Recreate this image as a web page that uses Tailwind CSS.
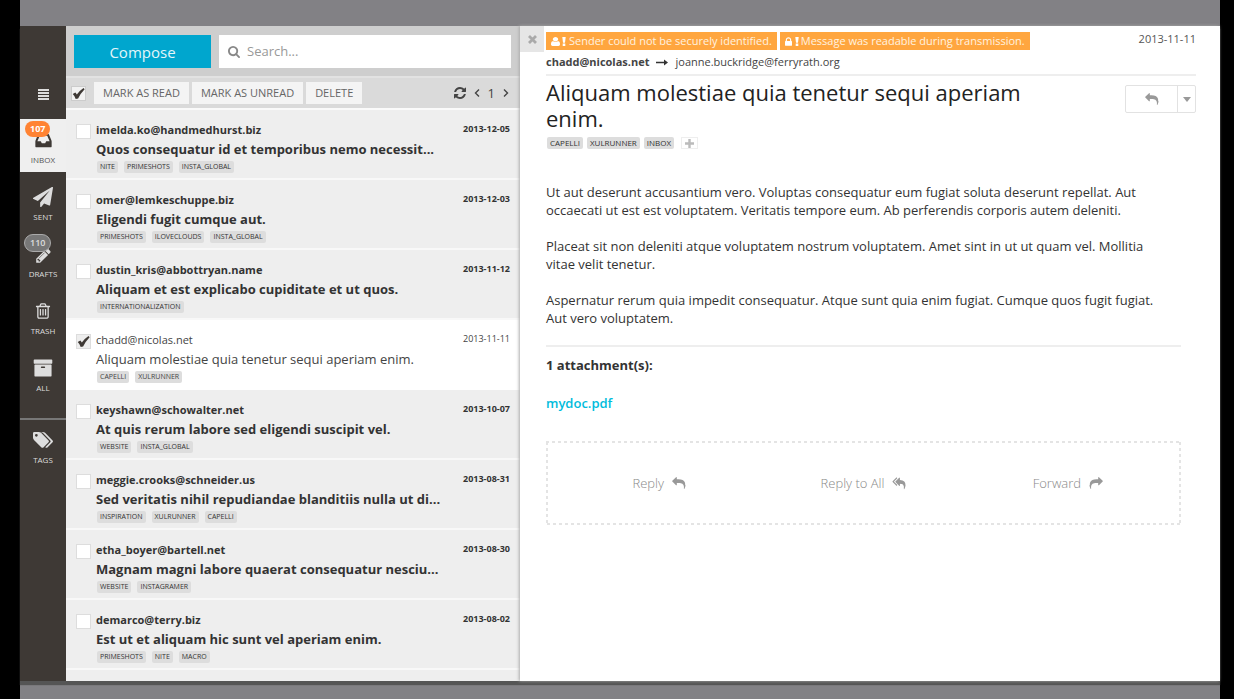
<!DOCTYPE html>
<html lang="en">
<head>
<meta charset="utf-8">
<title>Inbox</title>
<script src="https://cdn.jsdelivr.net/npm/@tailwindcss/browser@4"></script>
</head>
<body class="bg-black pr-[14px] pl-5 font-['Open_Sans',sans-serif] text-[#333]">
<svg class="hidden" aria-hidden="true">
  <symbol id="reply" viewBox="0 0 1792 1792"><path d="M1792 1120q0 166-127 451-3 7-10.5 24t-13.5 30-13 22q-12 17-28 17-15 0-23.500-10t-8.500-25q0-9 2.500-26.500t2.500-23.500q5-68 5-123 0-112-19.500-200.500t-54-153.500-88.500-112-115-78.500-142.500-48-161-23.500-178.500-6.500h-224v256q0 26-19 45t-45 19-45-19l-512-512q-19-19-19-45t19-45l512-512q19-19 45-19t45 19 19 45v256h224q713 0 875 403 53 134 53 333z"/></symbol>
  <symbol id="reply-all" viewBox="0 0 1792 1792"><path d="M640 1082v70q0 42-39 59-13 5-25 5-27 0-45-19l-512-512q-19-19-19-45t19-45l512-512q29-31 70-14 39 17 39 59v69l-397 398q-19 19-19 45t19 45zm1152 58q0 58-17 133.500t-38.500 138-48 125-40.500 90.500l-20 40q-8 17-28 17-6 0-9-1-25-8-23-34 43-400-106-565-64-71-170.500-110.500t-267.500-52.500v251q0 42-39 59-13 5-25 5-27 0-45-19l-512-512q-19-19-19-45t19-45l512-512q29-31 70-14 39 17 39 59v262q411 28 599 221 169 173 169 509z"/></symbol>
  <symbol id="check" viewBox="0 0 14 12"><path d="M.8 6.600L3.600 4.800Q4.600 5.800 5.200 7.200Q8 2.800 12.400 0L13.600 1.400Q9.400 5.600 6.600 11.400L4 12Q3 8.700.8 6.600z"/></symbol>
</svg>
<div class="flex h-screen flex-col bg-[#828185] pt-[26px] pb-[17px]">
<div class="flex min-h-0 flex-1 border-b border-[#555] bg-white shadow-[0_3px_1px_#555]">

  <nav class="w-[46px] shrink-0 bg-[#3e3935] text-[8px] text-[#ddd]">
    <div class="flex h-[93px] justify-center pt-[62px]">
      <button type="button" aria-label="Menu" class="h-3 w-[11px]"><svg class="h-[11px] w-[11px]" viewBox="0 0 11 11" fill="#ddd"><path d="M0 0h11v2H0zM0 3h11v2H0zM0 6h11v2H0zM0 9h11v2H0z"/></svg></button>
    </div>
    <a href="#inbox" class="relative flex h-[53px] flex-col items-center bg-[#efefef] pt-3 text-[#555]">
      <svg class="h-[19px] w-[19px]" viewBox="0 0 1792 1792" fill="#3e3935"><path d="M1151 960h316q-1-3-2.500-8t-2.500-8l-212-496h-708l-212 496q-1 2-2.500 8t-2.500 8h316l95 192h320zm513 30v482q0 26-19 45t-45 19h-1408q-26 0-45-19t-19-45v-482q0-62 25-123l238-552q10-25 36.500-42t52.500-17h832q26 0 52.500 17t36.500 42l238 552q25 61 25 123z"/></svg>
      <span class="absolute top-[2px] left-[5px] rounded-full bg-[#ff8333] px-[5px] text-[9px] leading-4 font-bold text-white">107</span>
      <span class="mt-1 leading-3">INBOX</span>
    </a>
    <a href="#sent" class="flex h-[57px] flex-col items-center pt-[15px]">
      <svg class="h-5 w-5" viewBox="0 0 1792 1792" fill="#ddd"><path d="M1764 11q33 24 27 64l-256 1536q-5 29-32 45-14 8-31 8-11 0-24-5l-453-185-242 295q-18 23-49 23-13 0-22-4-19-7-30.500-23.500t-11.500-36.500v-349l864-1059-1069 925-395-162q-37-14-40-55-2-40 32-59l1664-960q15-9 32-9 20 0 36 11z"/></svg>
      <span class="mt-1 leading-3">SENT</span>
    </a>
    <a href="#drafts" class="relative flex h-[57px] flex-col items-center pt-[18px]">
      <svg class="h-[17px] w-[17px]" viewBox="0 0 1792 1792" fill="#ddd"><path d="M491 1536l91-91-235-235-91 91v107h128v128h107zm523-928q0-22-22-22-10 0-17 7l-542 542q-7 7-7 17 0 22 22 22 10 0 17-7l542-542q7-7 7-17zm-54-192l416 416-832 832h-416v-416zm683 96q0 53-37 90l-166 166-416-416 166-165q36-38 90-38 53 0 91 38l235 234q37 39 37 91z"/></svg>
      <span class="absolute top-[5px] left-1 rounded-full border border-[#aaa] bg-[#777] px-[5px] text-[9px] leading-4 font-semibold text-[#ddd]">110</span>
      <span class="mt-1 leading-3">DRAFTS</span>
    </a>
    <a href="#trash" class="flex h-[57px] flex-col items-center pt-4">
      <svg class="h-[18px] w-[18px]" viewBox="0 0 1792 1792" fill="#ddd"><path d="M704 736v576q0 14-9 23t-23 9h-64q-14 0-23-9t-9-23v-576q0-14 9-23t23-9h64q14 0 23 9t9 23zm256 0v576q0 14-9 23t-23 9h-64q-14 0-23-9t-9-23v-576q0-14 9-23t23-9h64q14 0 23 9t9 23zm256 0v576q0 14-9 23t-23 9h-64q-14 0-23-9t-9-23v-576q0-14 9-23t23-9h64q14 0 23 9t9 23zm128 724v-948h-896v948q0 22 7 40.500t14.500 27 10.500 8.500h832q3 0 10.500-8.500t14.500-27 7-40.500zm-672-1076h448l-48-117q-7-9-17-11h-317q-10 2-17 11zm928 32v64q0 14-9 23t-23 9h-96v948q0 83-47 143.500t-113 60.500h-832q-66 0-113-58.500t-47-141.500v-952h-96q-14 0-23-9t-9-23v-64q0-14 9-23t23-9h309l70-167q15-37 54-63t79-26h320q40 0 79 26t54 63l70 167h309q14 0 23 9t9 23z"/></svg>
      <span class="mt-[5px] leading-3">TRASH</span>
    </a>
    <a href="#all" class="flex h-[77px] flex-col items-center border-b-2 border-[#777] pt-[15px]">
      <svg class="h-5 w-5" viewBox="0 0 1792 1792" fill="#ddd"><path d="M1088 832q0-26-19-45t-45-19h-256q-26 0-45 19t-19 45 19 45 45 19h256q26 0 45-19t19-45zm576-192v960q0 26-19 45t-45 19h-1408q-26 0-45-19t-19-45v-960q0-26 19-45t45-19h1408q26 0 45 19t19 45zm64-448v256q0 26-19 45t-45 19h-1536q-26 0-45-19t-19-45v-256q0-26 19-45t45-19h1536q26 0 45 19t19 45z"/></svg>
      <span class="mt-1 leading-3">ALL</span>
    </a>
    <a href="#tags" class="flex flex-col items-center pt-[10px]">
      <svg class="h-5 w-5" viewBox="0 0 1900 1792" fill="#ddd"><path d="M448 448q0-53-37.500-90.500t-90.500-37.500-90.500 37.500-37.500 90.500 37.500 90.500 90.500 37.500 90.500-37.500 37.500-90.500zm1067 576q0 53-37 90l-491 492q-39 37-91 37-53 0-90-37l-715-716q-38-37-64.500-101t-26.500-117v-416q0-52 38-90t90-38h416q53 0 117 26.500t102 64.500l715 714q37 39 37 91zm384 0q0 53-37 90l-491 492q-39 37-91 37-36 0-59-14t-53-45l470-470q37-37 37-90 0-52-37-91l-715-714q-38-38-102-64.500t-117-26.500h224q53 0 117 26.500t102 64.500l715 714q37 39 37 91z"/></svg>
      <span class="mt-1 leading-3">TAGS</span>
    </a>
  </nav>

  <section class="flex w-[454px] shrink-0 flex-col overflow-hidden bg-[#eee]">
    <div class="flex h-[52px] shrink-0 gap-2 border-b-2 border-[#e2e2e2] bg-[#cecece] pt-[9px] pr-[9px] pb-2 pl-2">
      <button type="button" class="w-[137px] bg-[#00a6ce] text-[15px] leading-5 text-[#e4f6fa]">Compose</button>
      <label class="flex flex-1 items-center gap-[7px] bg-white pl-[9px]">
        <svg class="h-3 w-3" viewBox="64 128 1664 1664" fill="#888"><path d="M1216 832q0-185-131.500-316.500t-316.500-131.500-316.500 131.500-131.500 316.500 131.500 316.500 316.500 131.500 316.500-131.500 131.500-316.500zm512 832q0 52-38 90t-90 38q-54 0-90-38l-343-342q-179 124-399 124-143 0-273.500-55.500t-225-150-150-225-55.500-273.500 55.500-273.500 150-225 225-150 273.500-55.500 273.500 55.500 225 150 150 225 55.500 273.500q0 220-124 399l343 343q37 37 37 90z"/></svg>
        <input type="text" aria-label="Search" placeholder="Search..." class="min-w-0 flex-1 text-[13px] outline-none placeholder:text-[#999]">
      </label>
    </div>
    <div class="flex h-8 shrink-0 items-center border-b-2 border-[#fafafa] bg-[#dadada] pr-[11px] pl-[5px] text-[11px] text-[#666]">
      <label class="relative h-[15px] w-[15px] border border-[#ccc] bg-[#f2f2f2]">
        <input type="checkbox" checked aria-label="Select all" class="absolute inset-0 appearance-none">
        <svg class="pointer-events-none absolute inset-0 h-[13px] w-[13px]" fill="#3e3935"><use href="#check"/></svg>
      </label>
      <div class="ml-2 flex gap-[3px]">
        <button type="button" class="h-[22px] bg-[#f4f4f4] px-[9px]">MARK AS READ</button>
        <button type="button" class="h-[22px] bg-[#f4f4f4] px-[9px]">MARK AS UNREAD</button>
        <button type="button" class="h-[22px] bg-[#f4f4f4] px-[9px]">DELETE</button>
      </div>
      <div class="ml-auto flex items-center gap-2 text-[#444]">
        <button type="button" aria-label="Refresh"><svg class="h-3 w-3" viewBox="128 128 1536 1536" fill="#444"><path d="M1639 1056q0 5-1 7-64 268-268 434.500t-478 166.500q-146 0-282.500-55t-243.500-157l-129 129q-19 19-45 19t-45-19-19-45v-448q0-26 19-45t45-19h448q26 0 45 19t19 45-19 45l-137 137q71 66 161 102t187 36q134 0 250-65t186-179q11-17 53-117 8-23 30-23h192q13 0 22.500 9.500t9.500 22.500zm25-800v448q0 26-19 45t-45 19h-448q-26 0-45-19t-19-45 19-45l138-138q-148-137-349-137-134 0-250 65t-186 179q-11 17-53 117-8 23-30 23h-199q-13 0-22.500-9.500t-9.500-22.500v-7q65-268 270-434.500t480-166.500q146 0 284 55.500t245 156.500l130-129q19-19 45-19t45 19 19 45z"/></svg></button>
        <button type="button" aria-label="Previous page"><svg class="h-2 w-[6px]" viewBox="0 0 6 8" fill="none" stroke="#444" stroke-width="1.400"><path d="M5 .5L1.500 4L5 7.500"/></svg></button>
        <span class="text-[13px] leading-4">1</span>
        <button type="button" aria-label="Next page"><svg class="h-2 w-[6px]" viewBox="0 0 6 8" fill="none" stroke="#444" stroke-width="1.400"><path d="M1 .5L4.500 4L1 7.500"/></svg></button>
      </div>
    </div>
    <ul id="mails" class="min-h-0 flex-1 overflow-hidden"></ul>
  </section>

  <main class="relative flex min-w-0 flex-1 bg-white shadow-[-1px_0_3px_#aaa]">
    <button type="button" aria-label="Close" class="flex h-[26px] w-6 shrink-0 items-center justify-center bg-[#e6e6e6]"><svg class="h-[9px] w-[9px]" viewBox="0 0 9 9" stroke="#aaa" stroke-width="2.800"><path d="M1 1L8 8M8 1L1 8"/></svg></button>
    <div class="ml-[2px] min-w-0 flex-1 pr-6">
      <div class="flex items-start gap-[3px] pt-[6px] text-[11px] leading-[18px] text-[#fff3e0]">
        <span class="flex h-[18px] items-center bg-[#ffa63f] px-[5px]"><svg class="mr-[2px] h-[9px] w-[9px]" viewBox="256 128 1280 1536" preserveAspectRatio="none" fill="#fff"><path d="M1536 1399q0 109-62.500 187t-150.500 78h-854q-88 0-150.500-78t-62.500-187q0-85 8.500-160.500t31.500-152 58.500-131 94-89 134.500-34.500q131 128 313 128t313-128q76 0 134.500 34.500t94 89 58.500 131 31.500 152 8.500 160.500zm-256-887q0 159-112.500 271.500t-271.500 112.500-271.500-112.500-112.500-271.500 112.500-271.500 271.500-112.500 271.500 112.500 112.500 271.500z"/></svg><svg class="mr-[3px] h-[9px] w-[4px]" viewBox="0 0 4 9" fill="#fff"><path d="M.3 0h3.400L3 5.700H1zM.7 6.500h2.600V9H.7z"/></svg>Sender could not be securely identified.</span>
        <span class="flex h-[18px] items-center bg-[#ffa63f] px-[5px]"><svg class="mr-[3px] h-[9px] w-[7px]" viewBox="320 128 1152 1408" fill="#fff"><path d="M640 768h512v-192q0-106-75-181t-181-75-181 75-75 181v192zm832 96v576q0 40-28 68t-68 28h-960q-40 0-68-28t-28-68v-576q0-40 28-68t68-28h32v-192q0-184 132-316t316-132 316 132 132 316v192h32q40 0 68 28t28 68z"/></svg><svg class="mr-[2px] h-[9px] w-[4px]" viewBox="0 0 4 9" fill="#fff"><path d="M.3 0h3.400L3 5.700H1zM.7 6.500h2.600V9H.7z"/></svg>Message was readable during transmission.</span>
        <time class="ml-auto leading-[14px] text-[#555]">2013-11-11</time>
      </div>
      <div class="flex h-[26px] items-center gap-[7px] border-b-2 border-[#eee] text-[11px] text-[#444]">
        <strong>chadd@nicolas.net</strong>
        <svg class="h-[7px] w-3" viewBox="0 0 12 7" fill="#333"><path d="M0 2.800h8V.5L12 3.500L8 6.500V4.200H0z"/></svg>
        <span>joanne.buckridge@ferryrath.org</span>
      </div>
      <div class="flex items-start justify-between pt-[3px]">
        <h1 class="w-[500px] text-[22px] leading-[26px] text-[#222]">Aliquam molestiae quia tenetur sequi aperiam enim.</h1>
        <div class="mt-[6px] flex h-7 w-[71px] rounded-xs border border-[#e2e2e2]">
          <button type="button" aria-label="Reply" class="flex flex-1 items-center justify-center"><svg class="h-[13px] w-[14px]" fill="#999"><use href="#reply"/></svg></button>
          <button type="button" aria-label="More actions" class="flex w-[18px] items-center justify-center border-l border-[#e2e2e2]"><svg class="h-[5px] w-2" viewBox="0 0 8 5" fill="#999"><path d="M0 0h8L4 5z"/></svg></button>
        </div>
      </div>
      <div class="mt-[6px] flex items-center gap-1 pl-px text-[8px] leading-3">
        <span class="rounded-xs bg-[#ddd] px-[3px]">CAPELLI</span><span class="rounded-xs bg-[#ddd] px-[3px]">XULRUNNER</span><span class="rounded-xs bg-[#ddd] px-[3px]">INBOX</span>
        <button type="button" aria-label="Add tag" class="ml-[3px] flex h-3 w-[17px] items-center justify-center border border-[#eee]"><svg class="h-[9px] w-[9px]" viewBox="0 0 9 9" fill="#bbb"><path d="M3.300 0h2.400v3.300H9v2.400H5.700V9H3.300V5.700H0V3.300h3.300z"/></svg></button>
      </div>
      <div class="mr-[15px] pt-[34px] text-[13px] leading-[18px]">
        <p class="mb-[18px]">Ut aut deserunt accusantium vero. Voluptas consequatur eum fugiat soluta deserunt repellat. Aut<br>occaecati ut est est voluptatem. Veritatis tempore eum. Ab perferendis corporis autem deleniti.</p>
        <p class="mb-[18px]">Placeat sit non deleniti atque voluptatem nostrum voluptatem. Amet sint in ut ut quam vel. Mollitia<br>vitae velit tenetur.</p>
        <p>Aspernatur rerum quia impedit consequatur. Atque sunt quia enim fugiat. Cumque quos fugit fugiat.<br>Aut vero voluptatem.</p>
        <h2 class="mt-[18px] border-t-2 border-[#eee] pt-[9px] font-bold">1 attachment(s):</h2>
        <a href="#mydoc" class="mt-5 inline-block font-semibold text-[#00bcdc]">mydoc.pdf</a>
        <div class="relative mt-[29px] grid h-[84px] grid-cols-3 px-[11px] text-[#888]">
          <svg class="pointer-events-none absolute inset-0 h-full w-full" fill="none" stroke="#e4e4e4" stroke-width="4" stroke-dasharray="3 3" aria-hidden="true"><rect width="100%" height="100%"/></svg>
          <button type="button" class="flex items-center justify-center gap-2 font-light">Reply <svg class="h-[13px] w-[14px]" fill="#999"><use href="#reply"/></svg></button>
          <button type="button" class="flex items-center justify-center gap-2 font-light">Reply to All <svg class="h-[13px] w-[14px]" fill="#999"><use href="#reply-all"/></svg></button>
          <button type="button" class="flex items-center justify-center gap-2 font-light">Forward <svg class="h-[13px] w-[14px] -scale-x-100" fill="#999"><use href="#reply"/></svg></button>
        </div>
      </div>
    </div>
  </main>
</div>
</div>
<script>
const mails = [
  ['imelda.ko@handmedhurst.biz', '2013-12-05', 'Quos consequatur id et temporibus nemo necessit...', ['NITE', 'PRIMESHOTS', 'INSTA_GLOBAL']],
  ['omer@lemkeschuppe.biz', '2013-12-03', 'Eligendi fugit cumque aut.', ['PRIMESHOTS', 'ILOVECLOUDS', 'INSTA_GLOBAL']],
  ['dustin_kris@abbottryan.name', '2013-11-12', 'Aliquam et est explicabo cupiditate et ut quos.', ['INTERNATIONALIZATION']],
  ['chadd@nicolas.net', '2013-11-11', 'Aliquam molestiae quia tenetur sequi aperiam enim.', ['CAPELLI', 'XULRUNNER'], true],
  ['keyshawn@schowalter.net', '2013-10-07', 'At quis rerum labore sed eligendi suscipit vel.', ['WEBSITE', 'INSTA_GLOBAL']],
  ['meggie.crooks@schneider.us', '2013-08-31', 'Sed veritatis nihil repudiandae blanditiis nulla ut di...', ['INSPIRATION', 'XULRUNNER', 'CAPELLI']],
  ['etha_boyer@bartell.net', '2013-08-30', 'Magnam magni labore quaerat consequatur nesciu...', ['WEBSITE', 'INSTAGRAMER']],
  ['demarco@terry.biz', '2013-08-02', 'Est ut et aliquam hic sunt vel aperiam enim.', ['PRIMESHOTS', 'NITE', 'MACRO']],
];
document.getElementById('mails').innerHTML = mails.map(([from, date, subject, tags, open]) => `
  <li class="flex h-[70px] border-b-2 pl-[10px] pr-[10px] pt-[13px] ${open ? 'border-white bg-white text-[#444]' : 'border-[#f8f8f8] font-bold text-[#333]'}">
    <label class="relative mt-px mr-[5px] h-[15px] w-[15px] shrink-0 border border-[#ddd] ${open ? 'bg-[#eee]' : 'bg-white'}">
      <input type="checkbox" aria-label="Select message from ${from}" ${open ? 'checked' : ''} class="absolute inset-0 appearance-none">
      ${open ? '<svg class="pointer-events-none absolute inset-0 h-[13px] w-[13px]" fill="#3e3935"><use href="#check"/></svg>' : ''}
    </label>
    <div class="min-w-0 flex-1">
      <div class="flex justify-between text-[11px] leading-[14px]"><span>${from}</span><time class="text-[9px] leading-3">${date}</time></div>
      <div class="mt-[2px] text-[13px] leading-5 whitespace-nowrap">${subject}</div>
      <div class="mt-[2px] flex gap-[6px] pl-px text-[7px] leading-3 font-normal">${tags.map(t => `<span class="rounded-xs bg-[#ddd] px-[3px]">${t}</span>`).join('')}</div>
    </div>
  </li>`).join('') + '<li class="h-[70px]"></li>';
</script>
</body>
</html>
